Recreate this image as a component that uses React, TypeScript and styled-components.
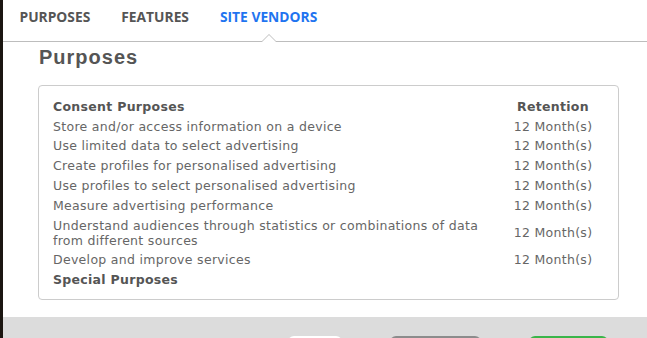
import React from "react";
import styled, { createGlobalStyle } from "styled-components";

const GlobalStyle = createGlobalStyle`
  html, body {
    margin: 0;
    height: 338px;
    overflow: hidden;
    background: #1b1611;
  }
`;

const Modal = styled.div`
  margin-left: 3px;
  height: 338px;
  background: #ffffff;
  display: flex;
  flex-direction: column;
`;

const TabBar = styled.div`
  height: 41px;
  display: flex;
  padding-left: 1px;
  border-bottom: 1px solid #bdbdbd;
`;

const Tab = styled.div<{ $active?: boolean }>`
  position: relative;
  padding: 0 15.5px 8px;
  display: flex;
  align-items: center;
  font-family: "Open Sans", "Liberation Sans", sans-serif;
  font-weight: 700;
  font-size: 13.8px;
  color: ${(p) => (p.$active ? "#1f74f0" : "#555555")};
  cursor: pointer;
`;

const Caret = styled.span`
  position: absolute;
  left: 50%;
  bottom: -1px;
  width: 0;
  height: 0;
  transform: translateX(-50%);
  border-left: 8px solid transparent;
  border-right: 8px solid transparent;
  border-bottom: 8px solid #bdbdbd;

  &::after {
    content: "";
    position: absolute;
    left: -7px;
    top: 1px;
    border-left: 7px solid transparent;
    border-right: 7px solid transparent;
    border-bottom: 7px solid #ffffff;
  }
`;

const Content = styled.div`
  flex: 1;
  padding: 0 28px 0 35px;
`;

const Heading = styled.h2`
  margin: 3px 0 16px 1px;
  font-family: "Liberation Sans", Arial, sans-serif;
  font-weight: 700;
  font-size: 20px;
  line-height: 24px;
  letter-spacing: 1px;
  color: #555555;
`;

const Box = styled.div`
  border: 1px solid #cccccc;
  border-radius: 4px;
  padding: 10.5px 10px 9px 14px;
  font-family: "DejaVu Sans", Verdana, sans-serif;
  font-size: 12.5px;
  letter-spacing: 0.3px;
  line-height: 15px;
  color: #666666;
`;

const Row = styled.div`
  display: grid;
  grid-template-columns: 1fr 110px;
  padding: 2.4px 0;
`;

const Label = styled.div<{ $bold?: boolean }>`
  font-weight: ${(p) => (p.$bold ? 700 : 400)};
  color: ${(p) => (p.$bold ? "#555555" : "#666666")};
  padding-right: 8px;
`;

const Value = styled(Label)`
  text-align: center;
  padding-right: 0;
  align-self: center;
  white-space: nowrap;
`;

const Footer = styled.div`
  height: 21px;
  background: #dcdcdc;
  margin-top: 17px;
  display: flex;
  align-items: flex-start;
  padding-top: 19px;
  box-sizing: border-box;
  overflow: hidden;
`;

const Button = styled.div<{ $bg: string; $w: number; $ml: number }>`
  flex: none;
  width: ${(p) => p.$w}px;
  height: 36px;
  margin-left: ${(p) => p.$ml}px;
  border-radius: 6px;
  background: ${(p) => p.$bg};
`;

const purposes = [
  "Store and/or access information on a device",
  "Use limited data to select advertising",
  "Create profiles for personalised advertising",
  "Use profiles to select personalised advertising",
  "Measure advertising performance",
  "Understand audiences through statistics or combinations of data from different sources",
  "Develop and improve services",
];

export default function App() {
  return (
    <>
      <GlobalStyle />
      <Modal>
        <TabBar>
          <Tab>PURPOSES</Tab>
          <Tab>FEATURES</Tab>
          <Tab $active>
            SITE VENDORS
            <Caret />
          </Tab>
        </TabBar>
        <Content>
          <Heading>Purposes</Heading>
          <Box>
            <Row>
              <Label $bold>Consent Purposes</Label>
              <Value $bold>Retention</Value>
            </Row>
            {purposes.map((p) => (
              <Row key={p}>
                <Label>{p}</Label>
                <Value>12 Month(s)</Value>
              </Row>
            ))}
            <Row>
              <Label $bold>Special Purposes</Label>
            </Row>
          </Box>
        </Content>
        <Footer>
          <Button $bg="#ffffff" $w={54} $ml={285} />
          <Button $bg="#8c8c8c" $w={91} $ml={48} />
          <Button $bg="#3bb54a" $w={79} $ml={48} />
        </Footer>
      </Modal>
    </>
  );
}
